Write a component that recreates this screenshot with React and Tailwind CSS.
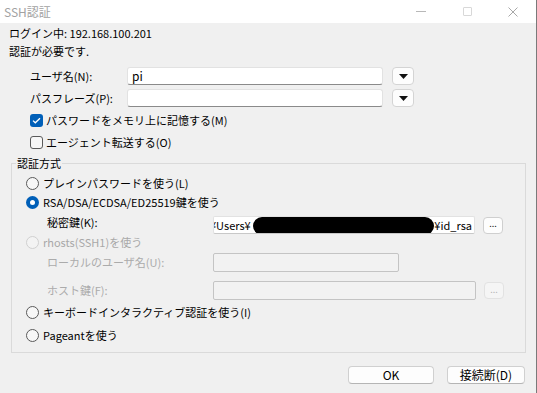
import React from 'react'

const FONT = "font-['Noto_Sans_CJK_JP','Noto_Sans',sans-serif]"

function Radio({ checked, disabled }) {
  if (checked) {
    return (
      <span className="w-[13px] h-[13px] rounded-full bg-[#005fb8] flex items-center justify-center shrink-0">
        <span className="w-[5px] h-[5px] rounded-full bg-white" />
      </span>
    )
  }
  return (
    <span
      className={
        disabled
          ? 'w-[13px] h-[13px] rounded-full border border-[#d0d0d0] bg-[#f3f3f3] shrink-0'
          : 'w-[13px] h-[13px] rounded-full border border-[#5a5a5a] bg-[#f7f7f7] shrink-0'
      }
    />
  )
}

function Checkbox({ checked }) {
  if (checked) {
    return (
      <span className="w-[13px] h-[13px] rounded-[3px] bg-[#005fb8] flex items-center justify-center shrink-0">
        <svg width="9" height="7" viewBox="0 0 9 7" fill="none">
          <path d="M1 3.6L3.3 5.8L8 1.2" stroke="white" strokeWidth="1.3" />
        </svg>
      </span>
    )
  }
  return <span className="w-[13px] h-[13px] rounded-[3px] border border-[#5a5a5a] bg-[#f7f7f7] shrink-0" />
}

function DropButton() {
  return (
    <div className="ml-[9px] w-[22px] h-[18px] rounded-[4px] bg-[#fdfdfd] border border-[#d4d4d4] flex items-center justify-center">
      <svg width="9" height="5" viewBox="0 0 9 5">
        <polygon points="0,0 9,0 4.5,5" fill="#111" />
      </svg>
    </div>
  )
}

function DotsButton({ disabled }) {
  return (
    <div
      className={
        disabled
          ? 'ml-[8px] w-[20px] h-[17px] rounded-[4px] bg-[#f5f5f5] border border-[#e2e2e2] flex items-center justify-center text-[9px] leading-none text-[#b5b5b5] pb-[3px]'
          : 'ml-[8px] w-[20px] h-[17px] rounded-[4px] bg-[#fdfdfd] border border-[#cfcfcf] flex items-center justify-center text-[9px] leading-none text-[#222] pb-[3px]'
      }
    >
      ...
    </div>
  )
}

function TextInput({ className, children }) {
  return (
    <div
      className={`h-[18px] bg-white border border-[#e2e2e2] border-b-[#8a8a8a] rounded-[3px] flex items-center px-[4px] ${className}`}
    >
      {children}
    </div>
  )
}

export default function App() {
  return (
    <div className={`w-[537px] h-[393px] bg-[#f0f0f0] text-[11px] text-black border-r border-[#7a7a7a] overflow-hidden ${FONT}`}>
      <div className="h-[23px] bg-white flex items-center justify-between">
        <span className="pl-[4px] text-[12px] text-[#a2a2a2]">SSH認証</span>
        <div className="flex h-full">
          <div className="w-[46px] flex items-center justify-center">
            <span className="w-[10px] h-[1px] bg-[#b8b8b8]" />
          </div>
          <div className="w-[46px] flex items-center justify-center">
            <span className="w-[9px] h-[9px] border border-[#d8d8d8] rounded-[1px]" />
          </div>
          <div className="w-[46px] flex items-center justify-center">
            <svg width="10" height="10" viewBox="0 0 10 10">
              <path d="M0.5 0.5L9.5 9.5M9.5 0.5L0.5 9.5" stroke="#a8a8a8" strokeWidth="1" />
            </svg>
          </div>
        </div>
      </div>

      <div className="pl-[9px] pr-[11px]">
        <div className="mt-[2px] h-[16px] leading-[16px]">ログイン中: 192.168.100.201</div>
        <div className="mt-[2px] h-[16px] leading-[16px]">認証が必要です.</div>

        <div className="mt-[8px] h-[18px] flex items-center pl-[21px]">
          <span className="w-[97px]">ユーザ名(N):</span>
          <TextInput className="w-[256px] text-[12px]">pi</TextInput>
          <DropButton />
        </div>
        <div className="mt-[4px] h-[18px] flex items-center pl-[21px]">
          <span className="w-[97px]">パスフレーズ(P):</span>
          <TextInput className="w-[256px]" />
          <DropButton />
        </div>

        <div className="mt-[5px] h-[16px] flex items-center gap-[3px] pl-[21px]">
          <Checkbox checked />
          <span>パスワードをメモリ上に記憶する(M)</span>
        </div>
        <div className="mt-[6px] h-[16px] flex items-center gap-[3px] pl-[21px]">
          <Checkbox />
          <span>エージェント転送する(O)</span>
        </div>

        <fieldset className="mt-[5px] ml-[2px] w-[515px] border border-[#dadada] pb-[9px]">
          <legend className="ml-[4px] px-[1px] h-[16px] leading-[16px]">認証方式</legend>

          <div className="mt-[4px] h-[16px] flex items-center gap-[4px] pl-[14px]">
            <Radio />
            <span>プレインパスワードを使う(L)</span>
          </div>
          <div className="mt-[3px] h-[16px] flex items-center gap-[4px] pl-[14px]">
            <Radio checked />
            <span>RSA/DSA/ECDSA/ED25519鍵を使う</span>
          </div>
          <div className="mt-[6px] h-[18px] flex items-center pl-[35px]">
            <span className="w-[166px] -mt-[5px]">秘密鍵(K):</span>
            <div className="relative w-[262px] h-[18px] bg-white border border-[#e2e2e2] border-b-[#c8c8c8] rounded-[2px] flex items-center overflow-hidden">
              <span className="-ml-[4px]">¥Users¥</span>
              <span className="flex-1" />
              <span className="pr-[2px]">¥id_rsa</span>
              <span className="absolute left-[39px] top-0 w-[181px] h-[18px] rounded-full bg-black" />
            </div>
            <DotsButton />
          </div>
          <div className="h-[16px] flex items-center gap-[4px] pl-[14px] text-[#a8a8a8]">
            <Radio disabled />
            <span>rhosts(SSH1)を使う</span>
          </div>
          <div className="mt-[3px] h-[19px] flex items-center pl-[35px] text-[#ababab]">
            <span className="w-[166px]">ローカルのユーザ名(U):</span>
            <div className="w-[186px] h-[19px] bg-[#f2f2f2] border border-[#c4c4c4] rounded-[2px]" />
          </div>
          <div className="mt-[9px] h-[19px] flex items-center pl-[35px] text-[#ababab]">
            <span className="w-[166px]">ホスト鍵(F):</span>
            <div className="w-[263px] h-[19px] bg-[#f2f2f2] border border-[#c4c4c4] rounded-[2px]" />
            <DotsButton disabled />
          </div>
          <div className="mt-[4px] h-[16px] flex items-center gap-[4px] pl-[14px]">
            <Radio />
            <span>キーボードインタラクティブ認証を使う(I)</span>
          </div>
          <div className="mt-[7px] h-[16px] flex items-center gap-[4px] pl-[14px]">
            <Radio />
            <span>Pageantを使う</span>
          </div>
        </fieldset>

        <div className="mt-[13px] flex justify-end">
          <div className="w-[86px] h-[18px] rounded-[4px] bg-[#fdfdfd] border border-[#d0d0d0] border-b-[#b5b5b5] flex items-center justify-center text-[12px]">
            OK
          </div>
          <div className="ml-[13px] w-[78px] h-[18px] rounded-[4px] bg-[#fdfdfd] border border-[#d0d0d0] border-b-[#b5b5b5] flex items-center justify-center text-[12px]">
            接続断(D)
          </div>
        </div>
      </div>
    </div>
  )
}
